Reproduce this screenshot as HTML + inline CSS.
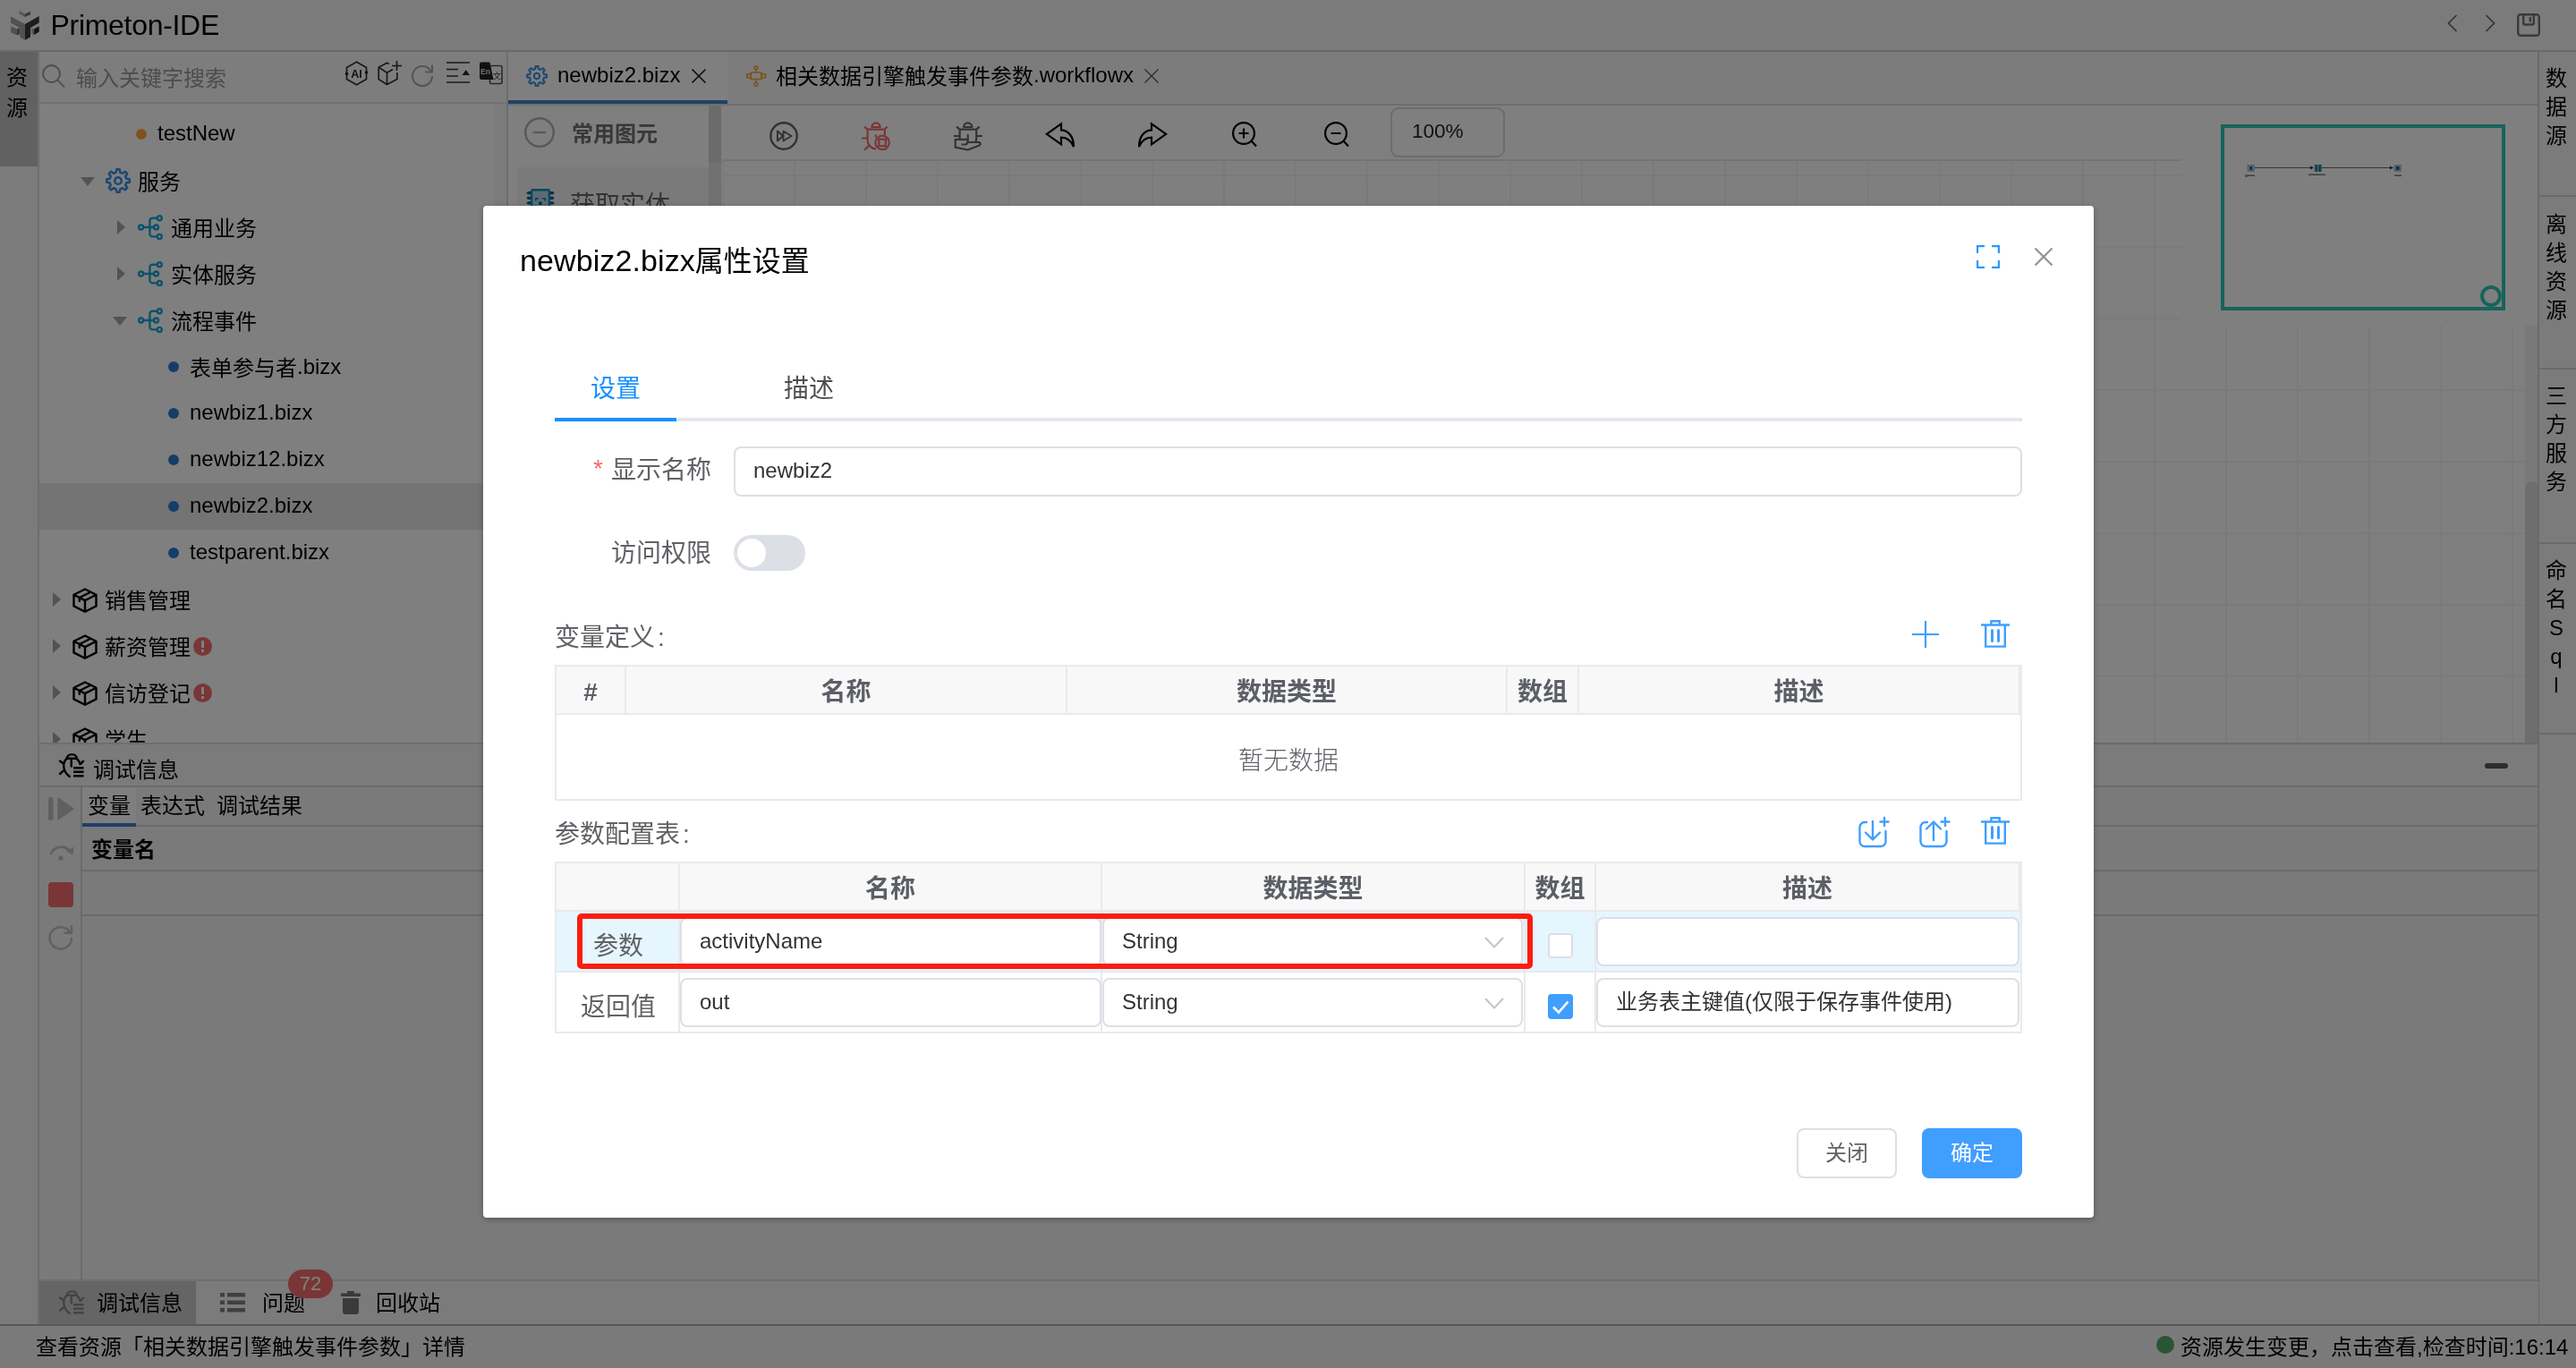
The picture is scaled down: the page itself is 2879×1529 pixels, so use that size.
<!DOCTYPE html>
<html lang="zh-CN">
<head>
<meta charset="utf-8">
<title>Primeton-IDE</title>
<style>
*{box-sizing:border-box;margin:0;padding:0}
html,body{width:2879px;height:1529px;overflow:hidden;background:#fff}
body{font-family:"Liberation Sans","Noto Sans CJK SC",sans-serif;font-size:24px;color:#000;position:relative}
.abs{position:absolute}
svg{display:block;overflow:visible}
#app{position:absolute;left:0;top:0;width:2879px;height:1529px;background:#f8f8f8;overflow:hidden;will-change:transform}
/* header */
#hdr{position:absolute;left:0;top:0;width:2879px;height:58px;background:#f6f6f6;border-bottom:2px solid #d2d2d2}
#hdr .title{position:absolute;left:56.500px;top:2px;font-size:32px;line-height:52px;letter-spacing:-0.3px}
/* left sidebar */
#lsb{position:absolute;left:0;top:58px;width:44px;height:1423px;background:#f6f6f6;border-right:2px solid #dadada}
#lsb .act{position:absolute;left:0;top:0;width:42px;height:128px;background:#c2c2c2}
.vtxt{position:absolute;width:42px;text-align:center;font-size:24px;line-height:33.5px}
/* left panel */
#lp{position:absolute;left:44px;top:58px;width:524px;height:774px;background:#fff;border-right:2px solid #d8d8d8;border-bottom:2px solid #dcdcdc;overflow:hidden}
#lp .search{position:absolute;left:0;top:0;width:522px;height:58px;background:#fafafa;border-bottom:2px solid #e2e2e2}
#lp .ph{position:absolute;left:41px;top:12px;font-size:24px;line-height:36px;color:#9a9a9a}
.row{position:absolute;left:0;width:508px;height:52px;font-size:24px;line-height:52px;white-space:nowrap}
.row.sel{background:#e8e8e8}
.row .t{position:absolute;top:2px}
.row .t.en{top:-1px}
.en2{position:relative;top:-2.500px}
.dot{position:absolute;width:12px;height:12px;border-radius:50%;top:21px}
.tri-r{position:absolute;width:0;height:0;border-left:9px solid #a6a6a6;border-top:7px solid transparent;border-bottom:7px solid transparent}
.tri-d{position:absolute;width:0;height:0;border-top:9px solid #a6a6a6;border-left:7px solid transparent;border-right:7px solid transparent}
#lp .sbar{position:absolute;left:508px;top:58px;width:14px;height:716px;background:#f7f7f7}
/* bottom debug panel */
#dbg{position:absolute;left:44px;top:832px;width:2793px;height:598px;background:#f5f5f5}
.hl{position:absolute;height:2px;background:#d4d4d4}
.vl{position:absolute;width:2px;background:#d4d4d4}
/* editor */
#ed{position:absolute;left:568px;top:58px;width:2269px;height:774px;background:#fff;overflow:hidden;border-bottom:2px solid #d4d4d4}
#tabs{position:absolute;left:0;top:0;width:2269px;height:60px;background:#f8f8f8;border-bottom:2px solid #dcdcdc}
#tabs .tab1{position:absolute;left:0;top:0;width:245px;height:58px;background:#fff;border-bottom:4px solid #4080cc}
#tabs .tx{position:absolute;top:0;line-height:54px;font-size:24px;white-space:nowrap}
#pal{position:absolute;left:0;top:60px;width:223px;height:714px;background:#fff}
#grid{position:absolute;left:240px;top:120px;width:2014px;height:652px;background-color:#fff;
 background-image:linear-gradient(to right,#f4f4f4 2px,transparent 2px),linear-gradient(to bottom,#f4f4f4 2px,transparent 2px);
 background-size:80px 80px;background-position:-1px 17px}
/* right sidebar */
#rsb{position:absolute;left:2836px;top:58px;width:43px;height:1422px;background:#f6f6f6;border-left:2px solid #d4d4d4}
/* bottom tabs & status */
#btabs{position:absolute;left:44px;top:1430px;width:2793px;height:50px;background:#f6f6f6;border-top:2px solid #dcdcdc}
#status{position:absolute;left:0;top:1480px;width:2879px;height:49px;background:#f4f4f4;border-top:2px solid #b0b0b0;font-size:24px;line-height:47px}
/* overlay */
#mask{position:absolute;left:0;top:0;width:2879px;height:1529px;background:rgba(0,0,0,.5)}
/* modal */
#modal{position:absolute;left:540px;top:230px;width:1800px;height:1131px;background:#fff;border-radius:4px;box-shadow:0 2px 6px rgba(0,0,0,.3);color:#606266;will-change:transform}
#modal .ttl{position:absolute;left:41px;top:32.500px;font-size:32px;line-height:56px;color:#000;white-space:nowrap}
.lbl{position:absolute;margin-top:2px;font-size:28px;line-height:40px;color:#606266;white-space:nowrap}
.inp{position:absolute;height:56px;border:2px solid #dcdfe6;border-radius:8px;background:#fff;font-size:24px;line-height:53px;color:#333;padding-left:20px;white-space:nowrap}
.tbl{position:absolute;left:80px;width:1640px;border:2px solid #e8eaec;background:#fff}
.th{position:absolute;top:0;height:54px;background:#f8f8f9;border-bottom:2px solid #e8eaec;border-right:2px solid #e8eaec;font-size:28px;font-weight:bold;line-height:58px;text-align:center;color:#5c5f66}
.cv{position:absolute;width:2px;background:#e8eaec}
.btn{position:absolute;top:1031px;width:112px;height:56px;border-radius:8px;font-size:24px;line-height:52px;text-align:center}
</style>
</head>
<body>
<div id="app">
<!--HEADER-->
<div id="hdr">
  <div class="title">Primeton-IDE</div>
  <svg class="abs" style="left:12px;top:9px" width="32" height="36" viewBox="0 0 32 36">
    <polygon points="9.300,3.100 15.950,6.500 15.950,9.900 9.300,6.500" fill="#b0b0b0"/><polygon points="15.950,6.500 22,3.800 22,7.300 15.950,9.900" fill="#747474"/>
    <polygon points="0,9.200 15.950,17.900 15.950,35.800 10.100,32.500 10.100,22.300 0,16.600" fill="#a2a2a2"/>
    <polygon points="15.950,17.900 31.700,9 31.700,16.600 22,22.100 22,32.500 15.950,35.800" fill="#3a3a3a"/>
    <polygon points="0.200,20.200 6.800,23.600 6.800,30.600 0.200,27.200" fill="#a2a2a2"/><polygon points="6.800,23.600 9.900,22.100 9.900,29.100 6.800,30.600" fill="#707070"/>
    <polygon points="22.800,21.900 26,23.400 26,29.900 22.800,28.400" fill="#aeaeae"/><polygon points="26,23.400 31.700,20.200 31.700,26.600 26,29.900" fill="#282828"/>
  </svg>
  <svg class="abs" style="left:2734.500px;top:15px" width="12" height="22" viewBox="0 0 12 22" fill="none" stroke="#666" stroke-width="1.700"><path d="M10.500 2L1.500 11l9 9"/></svg>
  <svg class="abs" style="left:2776.500px;top:15px" width="12" height="22" viewBox="0 0 12 22" fill="none" stroke="#666" stroke-width="1.700"><path d="M1.500 2l9 9-9 9"/></svg>
  <svg class="abs" style="left:2813px;top:15px" width="26" height="26" viewBox="0 0 26 26" fill="none" stroke="#747474" stroke-width="2.400"><rect x="1.200" y="1.200" width="23.600" height="23.600" rx="3"/><path d="M7.200 1.500v9a2 2 0 0 0 2 2h7.600a2 2 0 0 0 2-2V1.500M14.800 4v5.500"/></svg>

</div>
<!--LSB-->
<div id="lsb"><div class="act"></div>
  <div class="vtxt" style="left:-2px;top:12px">资<br>源</div>
</div>
<!--LP-->
<div id="lp">
  <div class="search">
    <svg class="abs" style="left:3px;top:14px" width="26" height="27" viewBox="0 0 26 27" fill="none" stroke="#999" stroke-width="1.800"><circle cx="10.500" cy="10.500" r="9.500"/><path d="M17.500 17.500L25 25.500"/></svg>
    <svg class="abs" style="left:341px;top:10px" width="27" height="28" viewBox="0 0 27 28" fill="none" stroke="#333" stroke-width="1.700" stroke-linejoin="round"><path d="M13.500 1.200L24.500 7.400V20.600L13.500 26.800L2.500 20.600V7.400Z"/><circle cx="2.500" cy="14.500" r="1.800" fill="#222" stroke="none"/><circle cx="24.500" cy="13" r="1.800" fill="#222" stroke="none"/><text x="13.500" y="18.600" font-family="Liberation Sans,sans-serif" font-size="12.500" font-weight="bold" fill="#222" stroke="none" text-anchor="middle">AI</text></svg>
    <svg class="abs" style="left:378px;top:10px" width="28" height="28" viewBox="0 0 28 28" fill="none" stroke="#333" stroke-width="1.700" stroke-linejoin="round"><path d="M13 3.500L10.500 2.200L1.200 7.300V20.500L10.500 26.500L21.800 20.500V13M1.200 7.300L10.500 13.300L17 9.500M10.500 13.300V26.500M21.500 0v11M16 5.500h11"/></svg>
    <svg class="abs" style="left:415px;top:13px" width="26" height="26" viewBox="0 0 26 26" fill="none" stroke="#a8a8a8" stroke-width="2"><path d="M22.800 9A11 11 0 1 0 24 14M24 1.500V9.500H16"/></svg>
    <svg class="abs" style="left:455px;top:11px" width="26" height="24" viewBox="0 0 26 24" fill="none" stroke="#333" stroke-width="1.700"><path d="M0 1h26M0 8.500h13M0 16h13M0 23h26"/><path d="M17.500 15l4.250-6 4.250 6z" fill="#2a2a2a" stroke="none"/></svg>
    <svg class="abs" style="left:492px;top:11px" width="26" height="26" viewBox="0 0 26 26"><rect x="11.500" y="4.500" width="13.500" height="20" rx="1.500" fill="none" stroke="#555" stroke-width="1.600"/><path d="M2 0.500h9.500l4 19.500H2a2 2 0 0 1-2-2V2.500a2 2 0 0 1 2-2z" fill="#222"/><text x="6.500" y="14" font-family="Liberation Sans,sans-serif" font-size="8.500" font-weight="bold" fill="#ddd" text-anchor="middle">En</text><text x="19.500" y="18.500" font-family="Noto Sans CJK SC,sans-serif" font-size="9" fill="#333" text-anchor="middle">文</text></svg>
<div class="ph">输入关键字搜索</div></div>
  <div class="sbar"></div>
<div class="row" style="top:66px"><div class="dot" style="left:108px;background:#ffa53f;top:20px"></div><div class="t en" style="left:132px">testNew</div></div>
<div class="row" style="top:118px"><div class="tri-d" style="left:46px;top:22px;border-top-width:10px;border-left-width:8px;border-right-width:8px"></div><svg class="abs" style="left:74px;top:12px" width="28" height="28" viewBox="0 0 28 28" fill="none" stroke="#3d8fe8" stroke-width="2.5" stroke-linejoin="round"><path d="M11.76 4.67 L12.28 1.21 L15.72 1.21 L16.24 4.67 L19.02 5.81 L21.83 3.75 L24.25 6.17 L22.19 8.98 L23.33 11.76 L26.79 12.28 L26.79 15.72 L23.33 16.24 L22.19 19.02 L24.25 21.83 L21.83 24.25 L19.02 22.19 L16.24 23.33 L15.72 26.79 L12.28 26.79 L11.76 23.33 L8.98 22.19 L6.17 24.25 L3.75 21.83 L5.81 19.02 L4.67 16.24 L1.21 15.72 L1.21 12.28 L4.67 11.76 L5.81 8.98 L3.75 6.17 L6.17 3.75 L8.98 5.81Z"/><circle cx="14" cy="14" r="3.800"/></svg><div class="t" style="left:110px">服务</div></div>
<div class="row" style="top:170px"><div class="tri-r" style="left:87px;top:18px;border-left-width:9px;border-top-width:8px;border-bottom-width:8px"></div><svg class="abs" style="left:110px;top:12px" width="28" height="28" viewBox="0 0 28 28" fill="none" stroke="#1aa5d4" stroke-width="2.4"><circle cx="3.600" cy="14" r="2.500"/><circle cx="20.500" cy="14" r="2.500"/><circle cx="24.300" cy="3.700" r="2.500"/><circle cx="24.300" cy="24.400" r="2.500"/><path d="M6.100 14H18M21.800 3.700H16.400a3 3 0 0 0-3 3V21.400a3 3 0 0 0 3 3H21.800"/></svg><div class="t" style="left:147px">通用业务</div></div>
<div class="row" style="top:222px"><div class="tri-r" style="left:87px;top:18px;border-left-width:9px;border-top-width:8px;border-bottom-width:8px"></div><svg class="abs" style="left:110px;top:12px" width="28" height="28" viewBox="0 0 28 28" fill="none" stroke="#1aa5d4" stroke-width="2.4"><circle cx="3.600" cy="14" r="2.500"/><circle cx="20.500" cy="14" r="2.500"/><circle cx="24.300" cy="3.700" r="2.500"/><circle cx="24.300" cy="24.400" r="2.500"/><path d="M6.100 14H18M21.800 3.700H16.400a3 3 0 0 0-3 3V21.400a3 3 0 0 0 3 3H21.800"/></svg><div class="t" style="left:147px">实体服务</div></div>
<div class="row" style="top:274px"><div class="tri-d" style="left:82px;top:22px;border-top-width:10px;border-left-width:8px;border-right-width:8px"></div><svg class="abs" style="left:110px;top:12px" width="28" height="28" viewBox="0 0 28 28" fill="none" stroke="#1aa5d4" stroke-width="2.4"><circle cx="3.600" cy="14" r="2.500"/><circle cx="20.500" cy="14" r="2.500"/><circle cx="24.300" cy="3.700" r="2.500"/><circle cx="24.300" cy="24.400" r="2.500"/><path d="M6.100 14H18M21.800 3.700H16.400a3 3 0 0 0-3 3V21.400a3 3 0 0 0 3 3H21.800"/></svg><div class="t" style="left:147px">流程事件</div></div>
<div class="row" style="top:326px"><div class="dot" style="left:144px;background:#2d78d2;top:20px"></div><div class="t" style="left:168px">表单参与者<span class="en2">.bizx</span></div></div>
<div class="row" style="top:378px"><div class="dot" style="left:144px;background:#2d78d2;top:20px"></div><div class="t en" style="left:168px">newbiz1.bizx</div></div>
<div class="row" style="top:430px"><div class="dot" style="left:144px;background:#2d78d2;top:20px"></div><div class="t en" style="left:168px">newbiz12.bizx</div></div>
<div class="row sel" style="top:482px"><div class="dot" style="left:144px;background:#2d78d2;top:20px"></div><div class="t en" style="left:168px">newbiz2.bizx</div></div>
<div class="row" style="top:534px"><div class="dot" style="left:144px;background:#2d78d2;top:20px"></div><div class="t en" style="left:168px">testparent.bizx</div></div>
<div class="row" style="top:586px"><div class="tri-r" style="left:15px;top:18px;border-left-width:9px;border-top-width:8px;border-bottom-width:8px"></div><svg class="abs" style="left:37px;top:13px" width="28" height="28" viewBox="0 0 28 28" fill="none" stroke="#000" stroke-width="2.400" stroke-linejoin="round"><path d="M14 1.500L26.500 7.800V20.400L14 26.800L1.500 20.400V7.800ZM1.500 7.800L14 14.100L26.500 7.800M14 14.100V26.800M20.200 4.700L7.800 11V15.800"/></svg><div class="t" style="left:73px">销售管理</div></div>
<div class="row" style="top:638px"><div class="tri-r" style="left:15px;top:18px;border-left-width:9px;border-top-width:8px;border-bottom-width:8px"></div><svg class="abs" style="left:37px;top:13px" width="28" height="28" viewBox="0 0 28 28" fill="none" stroke="#000" stroke-width="2.400" stroke-linejoin="round"><path d="M14 1.500L26.500 7.800V20.400L14 26.800L1.500 20.400V7.800ZM1.500 7.800L14 14.100L26.500 7.800M14 14.100V26.800M20.200 4.700L7.800 11V15.800"/></svg><div class="t" style="left:73px">薪资管理</div><div class="abs" style="left:172px;top:16px;width:21px;height:21px;border-radius:50%;background:#f56c6c"><div class="abs" style="left:9px;top:4px;width:3px;height:8px;background:#fff"></div><div class="abs" style="left:9px;top:14px;width:3px;height:3px;background:#fff"></div></div></div>
<div class="row" style="top:690px"><div class="tri-r" style="left:15px;top:18px;border-left-width:9px;border-top-width:8px;border-bottom-width:8px"></div><svg class="abs" style="left:37px;top:13px" width="28" height="28" viewBox="0 0 28 28" fill="none" stroke="#000" stroke-width="2.400" stroke-linejoin="round"><path d="M14 1.500L26.500 7.800V20.400L14 26.800L1.500 20.400V7.800ZM1.500 7.800L14 14.100L26.500 7.800M14 14.100V26.800M20.200 4.700L7.800 11V15.800"/></svg><div class="t" style="left:73px">信访登记</div><div class="abs" style="left:172px;top:16px;width:21px;height:21px;border-radius:50%;background:#f56c6c"><div class="abs" style="left:9px;top:4px;width:3px;height:8px;background:#fff"></div><div class="abs" style="left:9px;top:14px;width:3px;height:3px;background:#fff"></div></div></div>
<div class="row" style="top:742px"><div class="tri-r" style="left:15px;top:18px;border-left-width:9px;border-top-width:8px;border-bottom-width:8px"></div><svg class="abs" style="left:37px;top:13px" width="28" height="28" viewBox="0 0 28 28" fill="none" stroke="#000" stroke-width="2.400" stroke-linejoin="round"><path d="M14 1.500L26.500 7.800V20.400L14 26.800L1.500 20.400V7.800ZM1.500 7.800L14 14.100L26.500 7.800M14 14.100V26.800M20.200 4.700L7.800 11V15.800"/></svg><div class="t" style="left:73px">学生</div></div>
</div>
<!--ED-->
<div id="ed">
  <div id="tabs"><div class="tab1"></div>
    <svg class="abs" style="left:20px;top:15px" width="24" height="24" viewBox="0 0 24 24" fill="none" stroke="#3d8fe8" stroke-width="2.100" stroke-linejoin="round"><path d="M10.09 4.03 L10.54 1.10 L13.46 1.10 L13.91 4.03 L16.28 5.01 L18.67 3.26 L20.74 5.33 L18.99 7.72 L19.97 10.09 L22.90 10.54 L22.90 13.46 L19.97 13.91 L18.99 16.28 L20.74 18.67 L18.67 20.74 L16.28 18.99 L13.91 19.97 L13.46 22.90 L10.54 22.90 L10.09 19.97 L7.72 18.99 L5.33 20.74 L3.26 18.67 L5.01 16.28 L4.03 13.91 L1.10 13.46 L1.10 10.54 L4.03 10.09 L5.01 7.72 L3.26 5.33 L5.33 3.26 L7.72 5.01Z"/><circle cx="12" cy="12" r="3.200"/></svg>
    <svg class="abs" style="left:205px;top:19px" width="16" height="16" viewBox="0 0 16 16" fill="none" stroke="#111" stroke-width="1.500"><path d="M0.500 0.500l15 15M15.500 0.500l-15 15"/></svg>
    <svg class="abs" style="left:266px;top:15px" width="22" height="24" viewBox="0 0 22 24" fill="none" stroke="#f2a83c" stroke-width="1.600"><circle cx="11" cy="2.800" r="1.900"/><circle cx="11" cy="21.200" r="1.900"/><path d="M11 4.700V8M11 15.500V19.300"/><rect x="5.200" y="8" width="11.800" height="7.500"/><rect x="0.800" y="9.800" width="4.400" height="3.900"/><rect x="17" y="9.800" width="4.400" height="3.900"/></svg>
    <svg class="abs" style="left:711px;top:19px" width="16" height="16" viewBox="0 0 16 16" fill="none" stroke="#555" stroke-width="1.300"><path d="M0.500 0.500l15 15M15.500 0.500l-15 15"/></svg>

    <div class="tx" style="left:55px;top:-1px">newbiz2.bizx</div>
    <div class="tx" style="left:299px;top:0.500px">相关数据引擎触发事件参数<span style="position:relative;top:-1.500px">.workflowx</span></div>
  </div>
  <div id="grid"></div>
  <div id="pal"></div>

  <!-- palette -->
  <div class="abs" style="left:0;top:60px;width:224px;height:714px;background:#fff"></div>
  <svg class="abs" style="left:18px;top:73px" width="34" height="34" viewBox="0 0 34 34" fill="none" stroke="#b2b2b2" stroke-width="2.400"><circle cx="17" cy="17" r="15.800"/><path d="M9.500 17h15"/></svg>
  <div class="abs" style="left:71px;top:74px;font-size:24px;font-weight:bold;line-height:36px;color:#707070;white-space:nowrap">常用图元</div>
  <div class="abs" style="left:10px;top:129px;width:214px;height:80px;background:#f5f5f5"></div>
  <svg class="abs" style="left:20px;top:153px" width="32" height="34" viewBox="0 0 32 34"><rect x="6.100" y="1.200" width="19.800" height="31" rx="1.500" fill="#b5d8ea" stroke="#0f93c2" stroke-width="2.400"/><g fill="#0d6088"><path d="M0.300 4.7L2 3.1H5V6.3H2ZM31.700 4.7L30 3.1H27V6.3H30ZM0.300 10.3L2 8.7H5V11.9H2ZM31.700 10.3L30 8.7H27V11.9H30ZM0.300 15.9L2 14.3H5V17.5H2ZM31.700 15.9L30 14.3H27V17.5H30ZM0.300 21.5L2 19.9H5V23.1H2ZM31.700 21.5L30 19.9H27V23.1H30ZM0.300 27.1L2 25.5H5V28.7H2ZM31.700 27.1L30 25.5H27V28.7H30Z"/><rect x="14.200" y="14.500" width="3.500" height="3.400"/></g><path d="M10.800 13.500v-2.700h3M21.200 13.500v-2.700h-3M10.800 18.500v2.700h3M21.200 18.500v2.700h-3" fill="none" stroke="#0d6088" stroke-width="1.300"/></svg>
  <div class="abs" style="left:69px;top:151.500px;font-size:28px;line-height:40px;color:#666;white-space:nowrap">获取实体</div>
  <div class="abs" style="left:224px;top:60px;width:14px;height:714px;background:#e2e2e2"></div>
  <div class="abs" style="left:224px;top:60px;width:14px;height:64px;background:#d6d6d6;border-radius:7px 7px 0 0"></div>
  <div class="abs" style="left:238px;top:60px;width:2px;height:714px;background:#fafafa"></div>
  <!-- toolbar -->
  <div class="abs" style="left:240px;top:60px;width:1630px;height:60px;background:#fff"></div>
  <div class="abs" style="left:240px;top:120px;width:1630px;height:2px;background:#e6e6e6"></div>
  <svg class="abs" style="left:292px;top:78px" width="32" height="32" viewBox="0 0 32 32" fill="none" stroke="#666" stroke-width="2.400" stroke-linejoin="round"><circle cx="16" cy="16" r="14.700"/><path d="M9 10.500v11l6-5.500zM15.500 10.500v11l9-5.500z" stroke-width="2"/></svg>
  <svg class="abs" style="left:395px;top:78px" width="33" height="33" viewBox="0 0 33 33" fill="none" stroke="#f56c6c" stroke-width="2.200"><path d="M11.400 6A4.600 4.600 0 0 1 20.600 6ZM6.600 8.700H25.900M6.600 8.700V20.600C6.600 26 10.500 30 16 30.400M25.900 8.700V15M3.100 5.600L7 9.100M28.600 5.600L25.200 9.100M0 18.500H5.900M3.100 31.800L7.700 26.900M15.700 14.500v3M30.500 18.500l-1.500 0.800M27.500 31.500l-0.800-1.500"/><circle cx="23.100" cy="23.400" r="7.700"/><rect x="19.300" y="19.600" width="7.600" height="7.600"/></svg>
  <svg class="abs" style="left:498px;top:78px" width="33" height="33" viewBox="0 0 33 33" fill="none" stroke="#666" stroke-width="2.200" stroke-linejoin="round"><path d="M11.100 6A4.600 4.600 0 0 1 20.300 6ZM6.600 8.700H25.200M6.600 8.700V19.500M25.200 8.700V19C25.200 21 24.500 22.500 23.500 23M3.100 5.600L7 9.100M28.600 5.600L24.800 9.100M0 16H5.900M26.200 16H31.800M15.700 14.300V23M1.700 19.900H13.500C15.500 19.900 15.700 21.500 15.700 23H27.500C30 23 30.500 25.500 28.500 26.500L15.700 31.500L1.700 28.700ZM8.500 25.500H13C14.500 25.500 15 24.500 15 23"/></svg>
  <svg class="abs" style="left:600px;top:78px" width="34" height="30" viewBox="0 0 34 30" fill="none" stroke="#000" stroke-width="2.200" stroke-linejoin="miter"><path d="M1.800 13.800L18 2.300V9.300C26 9.300 32 17 32 28C29 21 24 17.700 18 17.700V25.300Z"/></svg>
  <svg class="abs" style="left:703px;top:78px" width="34" height="30" viewBox="0 0 34 30" fill="none" stroke="#000" stroke-width="2.200" stroke-linejoin="miter"><path transform="translate(34,0) scale(-1,1)" d="M1.800 13.800L18 2.300V9.300C26 9.300 32 17 32 28C29 21 24 17.700 18 17.700V25.300Z"/></svg>
  <svg class="abs" style="left:809px;top:78px" width="28" height="29" viewBox="0 0 28 29" fill="none" stroke="#000" stroke-width="2.200"><circle cx="13" cy="13" r="11.900"/><path d="M21.500 21.500L27 27.500M7.500 13H18.500M13 7.500V18.500"/></svg>
  <svg class="abs" style="left:912px;top:78px" width="28" height="29" viewBox="0 0 28 29" fill="none" stroke="#000" stroke-width="2.200"><circle cx="13" cy="13" r="11.900"/><path d="M21.500 21.500L27 27.500M7.500 13H18.500"/></svg>
  <div class="abs" style="left:986px;top:62px;width:128px;height:56px;border:2px solid #d4d8e0;border-radius:9px;font-size:22.500px;line-height:50px;padding-left:22px;color:#222">100%</div>
  <!-- canvas scrollbar -->
  <div class="abs" style="left:2254px;top:120px;width:15px;height:654px;background:#f2f2f2"></div>
  <div class="abs" style="left:2254px;top:480px;width:15px;height:294px;background:#dcdcdc;border-radius:8px 8px 0 0"></div>
  <!-- minimap -->
  <div class="abs" style="left:1870px;top:60px;width:399px;height:246px;background:#fff"></div>
  <div class="abs" style="left:1914px;top:81px;width:318px;height:208px;border:4px solid #2ec7b6"></div>
  <div class="abs" style="left:2204px;top:261px;width:24px;height:24px;border:4px solid #2ec7b6;border-radius:50%"></div>
  <svg class="abs" style="left:1940px;top:122px" width="180" height="22" viewBox="0 0 180 22"><path d="M12 7.500H77M86 7.500H166" stroke="#444" stroke-width="0.800" fill="none"/><path d="M74 5.500l4 2-4 2zM163 5.500l4 2-4 2z" fill="#333"/><rect x="3.500" y="4" width="8.500" height="8" fill="#9ecbe3"/><rect x="78.500" y="4" width="8.500" height="8" fill="#6fb4d6"/><rect x="167.500" y="4" width="8.500" height="8" fill="#9ecbe3"/><rect x="6.500" y="6" width="2.500" height="4" fill="#245e7d"/><rect x="80" y="4" width="1.500" height="8" fill="#245e7d"/><rect x="84" y="4" width="1.500" height="8" fill="#245e7d"/><rect x="170" y="6" width="3.500" height="4" fill="#245e7d"/><rect x="1" y="15" width="3" height="3" fill="#f08080"/><rect x="4" y="15.500" width="8" height="1.400" fill="#333" opacity="0.700"/><rect x="72" y="14.500" width="19" height="1.400" fill="#333" opacity="0.700"/><rect x="168" y="15.500" width="8" height="1.400" fill="#333" opacity="0.700"/></svg>

</div>
<!--DBG-->
<div id="dbg">

  <div class="abs" style="left:0;top:0;width:2793px;height:46px;background:#f7f7f7"></div>
  <svg class="abs" style="left:22px;top:11px" width="28" height="26" viewBox="0 0 28 26" fill="none" stroke="#000" stroke-width="2.400"><path d="M8.400 5A6 6 0 0 1 20.200 5M9 4.700H19.500M8.800 4.700C3.500 9 3.500 19 12.500 25.500M19.500 4.700C22 7 23.500 9.500 23.800 12M0.300 7L5.300 10.700M0.300 22.500L5.300 18.100M27.600 7L23.900 11.300M13.700 4.700V14.500M16 15.300H27.600M16 19.700H27.600M16 24.300H27.600"/></svg>
  <div class="abs" style="left:60px;top:10.500px;font-size:24px;line-height:36px;white-space:nowrap">调试信息</div>
  <div class="abs" style="left:2733px;top:21px;width:26px;height:6px;border-radius:3px;background:#5a5a5a"></div>
  <div class="hl" style="left:0;top:46px;width:2793px"></div>
  <div class="vl" style="left:46px;top:48px;height:551px"></div>
  <div class="abs" style="left:48px;top:48px;width:60px;height:44px;background:#fff;border-bottom:4px solid #3f81d0"></div>
  <div class="hl" style="left:108px;top:90px;width:2685px"></div>
  <div class="abs" style="left:54px;top:51px;font-size:24px;line-height:36px;white-space:nowrap">变量</div>
  <div class="abs" style="left:113px;top:51px;font-size:24px;line-height:36px;white-space:nowrap">表达式</div>
  <div class="abs" style="left:198px;top:51px;font-size:24px;line-height:36px;white-space:nowrap">调试结果</div>
  <div class="abs" style="left:58px;top:99.500px;font-size:24px;font-weight:bold;line-height:36px;white-space:nowrap">变量名</div>
  <div class="hl" style="left:48px;top:140px;width:2745px"></div>
  <div class="hl" style="left:48px;top:190px;width:2745px"></div>
  <svg class="abs" style="left:10px;top:59px" width="28" height="26" viewBox="0 0 28 26" fill="#c0c0c0"><rect x="0" y="0" width="5.700" height="26" rx="2.500"/><path d="M11 1v24l17-12z" stroke="#c0c0c0" stroke-width="1.500" stroke-linejoin="round"/></svg>
  <svg class="abs" style="left:11px;top:113px" width="28" height="18" viewBox="0 0 28 18" fill="none" stroke="#c0c0c0" stroke-width="2.800"><path d="M1.500 10A12.500 12.500 0 0 1 23.500 7"/><path d="M27.500 1.500L26.500 10.500L19 6.500Z" fill="#c0c0c0" stroke="none"/><circle cx="13" cy="14" r="2.600" fill="#c0c0c0" stroke="none"/></svg>
  <div class="abs" style="left:10px;top:154px;width:28px;height:28px;border-radius:4px;background:#f56c6c"></div>
  <svg class="abs" style="left:10px;top:201px" width="28" height="28" viewBox="0 0 28 28" fill="none" stroke="#c2c2c2" stroke-width="2.500"><path d="M24.500 9.500A12.200 12.200 0 1 0 26 15M26 1.500V9.800H17.700"/></svg>
</div>
<!--RSB-->
<div id="rsb">

  <div class="vtxt" style="left:-2px;top:13.5px;line-height:32px">数<br>据<br>源</div>
  <div class="hl" style="left:0;top:160px;width:43px"></div>
  <div class="vtxt" style="left:-2px;top:176.5px;line-height:32px">离<br>线<br>资<br>源</div>
  <div class="hl" style="left:0;top:353px;width:43px"></div>
  <div class="vtxt" style="left:-2px;top:368.5px;line-height:32px">三<br>方<br>服<br>务</div>
  <div class="hl" style="left:0;top:548px;width:43px"></div>
  <div class="vtxt" style="left:-2px;top:563.5px;line-height:32px">命<br>名<br>S<br>q<br>l</div>
  <div class="hl" style="left:0;top:761px;width:43px"></div>
</div>
<!--BT-->
<div id="btabs">

  <div class="abs" style="left:0;top:0;width:175px;height:48px;background:#cacaca"></div>
  <svg class="abs" style="left:22px;top:11px" width="28" height="26" viewBox="0 0 28 26" fill="none" stroke="#888" stroke-width="2.400"><path d="M8.400 5A6 6 0 0 1 20.200 5M9 4.700H19.500M8.800 4.700C3.500 9 3.500 19 12.500 25.500M19.500 4.700C22 7 23.500 9.500 23.800 12M0.300 7L5.300 10.700M0.300 22.500L5.300 18.100M27.600 7L23.900 11.300M13.700 4.700V14.500M16 15.300H27.600M16 19.700H27.600M16 24.300H27.600"/></svg>
  <div class="abs" style="left:64px;top:7px;font-size:24px;line-height:36px;white-space:nowrap">调试信息</div>
  <svg class="abs" style="left:202px;top:13px" width="28" height="22" viewBox="0 0 28 22" fill="#808080"><rect x="0" y="0" width="5" height="4.500"/><rect x="8" y="0" width="20" height="4.500"/><rect x="0" y="8.500" width="5" height="4.500"/><rect x="8" y="8.500" width="20" height="4.500"/><rect x="0" y="17" width="5" height="4.500"/><rect x="8" y="17" width="20" height="4.500"/></svg>
  <div class="abs" style="left:249px;top:7px;font-size:24px;line-height:36px;white-space:nowrap">问题</div>
  <div class="abs" style="left:278px;top:-13px;width:50px;height:32px;border-radius:16px;background:#f56c6c;color:#fff;font-size:22px;line-height:32px;text-align:center">72</div>
  <svg class="abs" style="left:337px;top:11px" width="22" height="26" viewBox="0 0 22 26" fill="#747474"><path d="M7 0h8v2.500h7v3.500H0V2.500h7zM2 8h18v15a3 3 0 0 1-3 3H5a3 3 0 0 1-3-3z"/></svg>
  <div class="abs" style="left:376px;top:7px;font-size:24px;line-height:36px;white-space:nowrap">回收站</div>
</div>
<div id="status">

  <div class="abs" style="left:2410px;top:11px;width:20px;height:20px;border-radius:50%;background:#55aa68"></div>
  <div class="abs" style="left:2437px;top:0;white-space:nowrap">资源发生变更，点击查看,检查时间:16:14</div>
  <div class="abs" style="left:40px;top:0">查看资源「相关数据引擎触发事件参数」详情</div>
</div>
</div>
<div id="mask"></div>
<!--MODAL-->
<div id="modal">
  <div class="ttl"><span style="font-size:34px;letter-spacing:0.100px">newbiz2.bizx</span>属性设置</div>

  <!-- fullscreen + close -->
  <svg class="abs" style="left:1669px;top:44px" width="26" height="26" viewBox="0 0 26 26" fill="none" stroke="#2d96ff" stroke-width="2.200"><path d="M1.100 9V1.100H9M17 1.100h7.900V9M24.900 17v7.900H17M9 24.900H1.100V17"/></svg>
  <svg class="abs" style="left:1734px;top:47px" width="20" height="20" viewBox="0 0 20 20" fill="none" stroke="#909399" stroke-width="2.2"><path d="M0.500 0.500L19.500 19.500M19.500 0.500L0.500 19.500"/></svg>
  <!-- tabs -->
  <div class="lbl" style="left:120px;top:183px;color:#1890ff">设置</div>
  <div class="lbl" style="left:336px;top:183px;color:#4e4e4e">描述</div>
  <div class="abs" style="left:80px;top:237px;width:1640px;height:4px;background:#e4e7ed"></div>
  <div class="abs" style="left:80px;top:237px;width:136px;height:4px;background:#1890ff"></div>
  <!-- form -->
  <div class="lbl" style="left:123px;top:272px;color:#f56c6c;font-size:28px">*</div>
  <div class="lbl" style="left:143px;top:274px">显示名称</div>
  <div class="inp" style="left:280px;top:269px;width:1440px;line-height:49px">newbiz2</div>
  <div class="lbl" style="left:143px;top:367px">访问权限</div>
  <div class="abs" style="left:280px;top:368px;width:80px;height:40px;border-radius:20px;background:#dcdfe6"><div class="abs" style="left:4px;top:4px;width:32px;height:32px;border-radius:50%;background:#fff"></div></div>
  <!-- section 1 -->
  <div class="lbl" style="left:80px;top:461px">变量定义<span style="margin-left:3px">:</span></div>
  <svg class="abs" style="left:1597px;top:463.500px" width="30" height="30" viewBox="0 0 30 30" fill="none" stroke="#409eff" stroke-width="2.2"><path d="M15 0v30M0 15h30"/></svg>
  <svg class="abs trash" style="left:1674px;top:462px" width="32" height="32" viewBox="0 0 32 32" fill="none" stroke="#409eff" stroke-width="2.4"><path d="M0 6.500h32M11.400 6V2.200h9.300V6M5.200 7v23.600h21.600V7"/><path d="M12.500 12.500v12M19.500 12.500v12" stroke-width="3" stroke-linecap="round"/></svg>
  <div class="tbl" style="top:513px;height:152px">
    <div class="th" style="left:0;width:78px;border-right:2px solid #e8eaec">#</div>
    <div class="th" style="left:78px;width:493px">名称</div>
    <div class="th" style="left:571px;width:492px">数据类型</div>
    <div class="th" style="left:1063px;width:80px">数组</div>
    <div class="th" style="left:1143px;width:493px;border-right:2px solid #e8eaec">描述</div>
    <div class="abs" style="left:0;top:86px;width:1636px;text-align:center;font-size:28px;line-height:40px;color:#5e6166;font-weight:300">暂无数据</div>
  </div>
  <!-- section 2 -->
  <div class="lbl" style="left:80px;top:681px">参数配置表<span style="margin-left:3px">:</span></div>
  <svg class="abs" style="left:1537px;top:683px" width="34" height="34" viewBox="0 0 34 34" fill="none" stroke="#409eff" stroke-width="2.4" stroke-linecap="round" stroke-linejoin="round"><path d="M9 6H7a5.500 5.500 0 0 0-5.500 5.500v16A5.500 5.500 0 0 0 7 33h18a5.500 5.500 0 0 0 5.500-5.500V16M16 5v20M8 17.500l8 8 8-8M29 1v9M24.500 5.500h9"/></svg>
  <svg class="abs" style="left:1605px;top:683px" width="34" height="34" viewBox="0 0 34 34" fill="none" stroke="#409eff" stroke-width="2.4" stroke-linecap="round" stroke-linejoin="round"><path d="M9 6H7a5.500 5.500 0 0 0-5.500 5.500v16A5.500 5.500 0 0 0 7 33h18a5.500 5.500 0 0 0 5.500-5.500V16M16 26V6M8 13.500l8-8 8 8M29 1v9M24.500 5.500h9"/></svg>
  <svg class="abs trash" style="left:1674px;top:682px" width="32" height="32" viewBox="0 0 32 32" fill="none" stroke="#409eff" stroke-width="2.4"><path d="M0 6.500h32M11.400 6V2.200h9.300V6M5.200 7v23.600h21.600V7"/><path d="M12.500 12.500v12M19.500 12.500v12" stroke-width="3" stroke-linecap="round"/></svg>
  <div class="tbl" style="top:733px;height:192px">
    <div class="th" style="left:0;width:138px"></div>
    <div class="th" style="left:138px;width:472px">名称</div>
    <div class="th" style="left:610px;width:473px">数据类型</div>
    <div class="th" style="left:1083px;width:79px">数组</div>
    <div class="th" style="left:1162px;width:474px;border-right:2px solid #e8eaec">描述</div>
    <!-- row1 -->
    <div class="abs" style="left:0;top:54px;width:1636px;height:68px;background:#e6f6fe;border-bottom:2px solid #e4eaf0"></div>
    <div class="abs" style="left:0;top:122px;width:1636px;height:66px;background:#fff"></div>
    <div class="cv" style="left:136px;top:54px;height:134px"></div>
    <div class="cv" style="left:608px;top:54px;height:134px"></div>
    <div class="cv" style="left:1081px;top:54px;height:134px"></div>
    <div class="cv" style="left:1160px;top:54px;height:134px"></div>
    <div class="lbl" style="left:0;top:71px;width:138px;text-align:center">参数</div>
    <div class="lbl" style="left:0;top:139px;width:138px;text-align:center">返回值</div>
    <div class="inp" style="left:138px;top:60px;height:55px;line-height:50px;width:471px">activityName</div>
    <div class="inp" style="left:610px;top:60px;height:55px;line-height:50px;width:470px">String</div>
    <div class="inp" style="left:1162px;top:60px;height:55px;line-height:50px;width:473px"></div>
    <div class="inp" style="left:138px;top:128px;height:55px;line-height:50px;width:471px">out</div>
    <div class="inp" style="left:610px;top:128px;height:55px;line-height:50px;width:470px">String</div>
    <div class="inp" style="left:1162px;top:128px;height:55px;line-height:50px;width:473px">业务表主键值(仅限于保存事件使用)</div>
    <svg class="abs" style="left:1037px;top:82px" width="22" height="13" viewBox="0 0 22 13" fill="none" stroke="#c0c4cc" stroke-width="2"><path d="M1 1l10 10.500L21 1"/></svg>
    <svg class="abs" style="left:1037px;top:150px" width="22" height="13" viewBox="0 0 22 13" fill="none" stroke="#c0c4cc" stroke-width="2"><path d="M1 1l10 10.500L21 1"/></svg>
    <div class="abs" style="left:1108px;top:78px;width:28px;height:28px;border:2px solid #dcdfe6;border-radius:4px;background:#fff"></div>
    <div class="abs" style="left:1108px;top:146px;width:28px;height:28px;border-radius:4px;background:#409eff"><svg width="28" height="28" viewBox="0 0 28 28" fill="none" stroke="#fff" stroke-width="2.6"><path d="M6 14.500l6 6L22.500 8.500"/></svg></div>
    <!-- red highlight -->
    <div class="abs" style="left:23px;top:56px;width:1068px;height:62px;border:6px solid #fb1d10;border-radius:5px"></div>
  </div>
  <!-- footer -->
  <div class="btn" style="left:1468px;border:2px solid #dcdfe6;color:#606266;background:#fff">关闭</div>
  <div class="btn" style="left:1608px;background:#409eff;color:#fff;line-height:56px">确定</div>

</div>
</body>
</html>
